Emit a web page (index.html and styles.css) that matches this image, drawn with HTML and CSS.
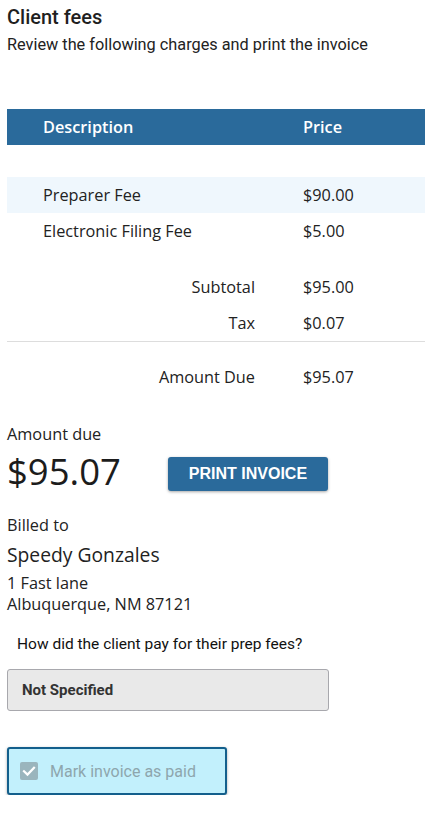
FILE: index.html
```html
<!DOCTYPE html>
<html>
<head>
<meta charset="utf-8">
<link rel="stylesheet" href="styles.css">
</head>
<body>
<div class="page">
  <h1 class="title">Client fees</h1>
  <p class="subtitle">Review the following charges and print the invoice</p>

  <div class="fees">
    <div class="row head"><div class="desc">Description</div><div class="price">Price</div></div>
    <div class="row spacer"></div>
    <div class="row shaded"><div class="desc">Preparer Fee</div><div class="price">$90.00</div></div>
    <div class="row"><div class="desc">Electronic Filing Fee</div><div class="price">$5.00</div></div>
    <div class="totals">
      <div class="row"><div class="label">Subtotal</div><div class="price">$95.00</div></div>
      <div class="row"><div class="label">Tax</div><div class="price">$0.07</div></div>
    </div>
    <div class="row due"><div class="label">Amount Due</div><div class="price">$95.07</div></div>
  </div>

  <div class="summary">
    <div class="due-label">Amount due</div>
    <div class="due-line">
      <div class="due-amount">$95.07</div>
      <button class="print-btn">PRINT INVOICE</button>
    </div>
  </div>

  <div class="billed">
    <div class="billed-label">Billed to</div>
    <div class="billed-name">Speedy Gonzales</div>
    <div class="billed-addr">1 Fast lane<br>Albuquerque, NM 87121</div>
  </div>

  <div class="pay-question">How did the client pay for their prep fees?</div>
  <div class="select">Not Specified</div>

  <label class="paid-box">
    <span class="check">
      <svg width="18" height="18" viewBox="0 0 18 18"><path d="M4 9.2 L7.5 12.6 L14 5.8" fill="none" stroke="#fff" stroke-width="2.2" stroke-linecap="square"/></svg>
    </span>
    <span class="paid-text">Mark invoice as paid</span>
  </label>
</div>
</body>
</html>
```
FILE: styles.css
```css
* { box-sizing: border-box; }
body {
  margin: 0;
  background: #fff;
  color: #222;
  font-family: "Open Sans", sans-serif;
}
.page {
  padding: 5px 2px 0 7px;
}
.title {
  font-family: Roboto, sans-serif;
  font-weight: 500;
  font-size: 20px;
  line-height: 24px;
  margin: 0;
  color: #1f1f1f;
}
.subtitle {
  font-family: Roboto, sans-serif;
  font-size: 16.3px;
  line-height: 20px;
  margin: 6px 0 0;
  color: #222;
}
.fees {
  margin-top: 54px;
  font-size: 16.3px;
}
.row {
  display: grid;
  grid-template-columns: 260px 1fr;
  height: 36px;
  align-items: center;
}
.row .desc { padding-left: 36px; }
.row .price { padding-left: 36px; }
.row.head {
  background: #2a6a9b;
  color: #fff;
  font-weight: 600;
}
.row.spacer { height: 32px; }
.row.shaded { background: #eff7fd; }
.row .label { text-align: right; padding-right: 12px; }
.totals {
  margin-top: 20px;
  border-bottom: 1px solid #ddd;
}
.row.due { margin-top: 17px; }
.summary { margin-top: 28px; }
.due-label { font-size: 16.3px; line-height: 22px; }
.due-line {
  display: flex;
  align-items: flex-start;
  gap: 47px;
  margin-top: 4px;
}
.due-amount {
  font-size: 36.5px;
  line-height: 40px;
  margin-top: 2px;
  color: #1c1c1c;
}
.print-btn {
  width: 160px;
  height: 34px;
  margin-top: 8px;
  border: none;
  border-radius: 3px;
  background: #2a6a9b;
  color: #fff;
  font-family: "Liberation Sans", Arial, sans-serif;
  font-weight: 700;
  font-size: 16px;
  box-shadow: 0 1px 3px rgba(0,0,0,0.35);
}
.billed { margin-top: 23px; }
.billed-label { font-size: 16.3px; line-height: 22px; }
.billed-name { font-size: 19.3px; line-height: 26px; margin-top: 6px; }
.billed-addr { font-size: 16.3px; line-height: 21px; margin-top: 5px; }
.pay-question {
  font-family: Roboto, sans-serif;
  font-size: 15.5px;
  line-height: 20px;
  margin: 19px 0 0 10px;
  color: #111;
}
.select {
  width: 322px;
  height: 42px;
  margin-top: 15px;
  background: #e9e9e9;
  border: 1px solid #a8a8ad;
  border-radius: 3px;
  font-family: Roboto, sans-serif;
  font-weight: 700;
  font-size: 15px;
  color: #333;
  padding-left: 14px;
  display: flex;
  align-items: center;
}
.paid-box {
  margin-top: 36px;
  width: 220px;
  height: 48px;
  display: flex;
  align-items: center;
  gap: 12px;
  padding-left: 11px;
  background: #c2f0fc;
  border: 2px solid #135f8c;
  border-radius: 3px;
  box-shadow: 0 1px 3px rgba(0,0,0,0.35);
}
.check {
  width: 18px;
  height: 18px;
  background: #9ab5bd;
  border-radius: 2px;
  display: flex;
}
.paid-text {
  font-family: Roboto, sans-serif;
  font-size: 16px;
  color: #8ea6ad;
}
```
